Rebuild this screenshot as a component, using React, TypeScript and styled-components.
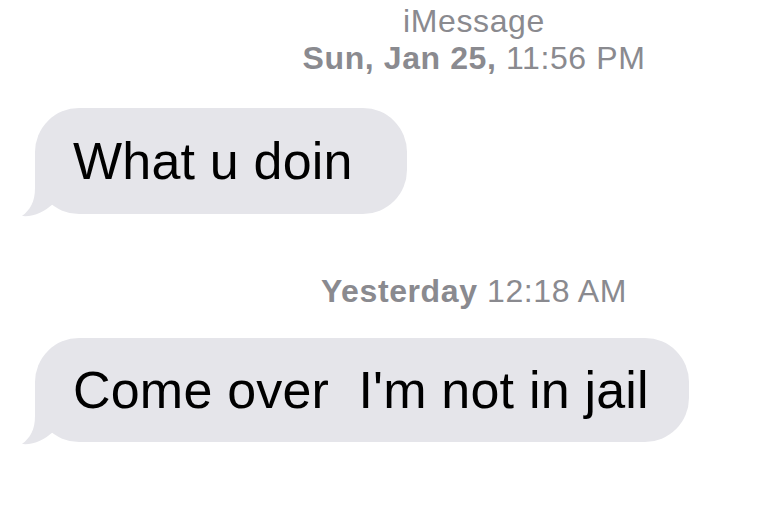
import React from "react";
import styled, { createGlobalStyle } from "styled-components";

const Global = createGlobalStyle`
  html, body { margin: 0; padding: 0; background: #ffffff; }
  body { font-family: "Liberation Sans", Arial, Helvetica, sans-serif; }
`;

const Thread = styled.div`
  width: 760px;
  height: 505px;
  box-sizing: border-box;
  padding-top: 3px;
  display: flex;
  flex-direction: column;
  align-items: flex-start;
  background: #ffffff;
  overflow: hidden;
`;

const Stamp = styled.div<{ $gap: number }>`
  align-self: stretch;
  margin: ${(p) => p.$gap}px 0 0 188px;
  text-align: center;
  color: #8a8a8f;
  font-size: 32px;
  line-height: 37px;
  letter-spacing: 0.6px;
  white-space: nowrap;
  b { font-weight: 700; }
`;

const Bubble = styled.div<{ $gap: number; $pad: number }>`
  position: relative;
  margin: ${(p) => p.$gap}px 0 0 35px;
  padding: ${(p) => p.$pad}px 40px ${(p) => p.$pad}px 38px;
  background: #e5e5ea;
  border-radius: 44px;
  color: #000000;
  font-size: 52px;
  line-height: 60px;
  letter-spacing: 0.2px;
  white-space: pre;
`;

const Tail = styled.svg`
  position: absolute;
  left: -14px;
  bottom: -4px;
  width: 44px;
  height: 48px;
  overflow: visible;
`;

function BubbleTail() {
  return (
    <Tail viewBox="0 0 44 48" aria-hidden="true">
      <path
        d="M14 0 L14 18 C14 32 9 40 1 46 C13 47 23 42 32 34 L32 0 Z"
        fill="#e5e5ea"
      />
    </Tail>
  );
}

export default function App() {
  return (
    <>
      <Global />
      <Thread>
        <Stamp $gap={0}>
          iMessage
          <br />
          <b>Sun, Jan 25,</b> 11:56 PM
        </Stamp>
        <Bubble $gap={31} $pad={23}>
          {"What u doin "}
          <BubbleTail />
        </Bubble>
        <Stamp $gap={59}>
          <b>Yesterday</b> 12:18 AM
        </Stamp>
        <Bubble $gap={28} $pad={22}>
          {"Come over  I'm not in jail"}
          <BubbleTail />
        </Bubble>
      </Thread>
    </>
  );
}
